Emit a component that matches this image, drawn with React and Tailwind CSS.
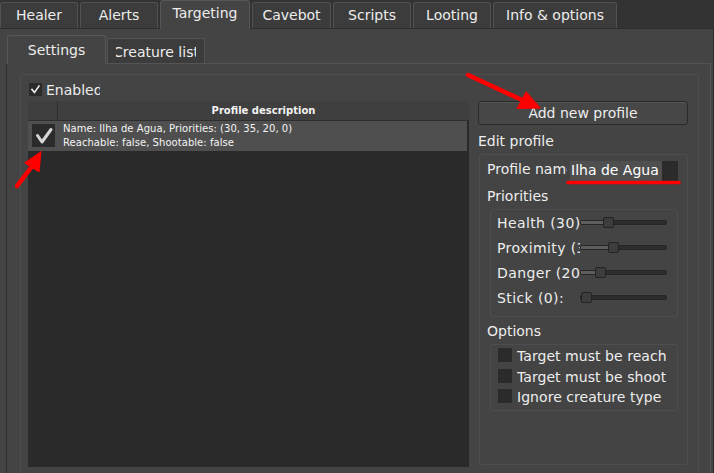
import React from "react";

const tabs = [
  { label: "Healer", w: "w-[78px]" },
  { label: "Alerts", w: "w-[78px]" },
  { label: "Targeting", w: "w-[90px]", active: true },
  { label: "Cavebot", w: "w-[79px]" },
  { label: "Scripts", w: "w-[78px]" },
  { label: "Looting", w: "w-[78px]" },
  { label: "Info & options", w: "w-[124px]" },
];

const sliders = [
  { label: "Health (30)", pos: 23 },
  { label: "Proximity (35):", pos: 28 },
  { label: "Danger (20):", pos: 15 },
  { label: "Stick (0):", pos: 1 },
];

const options = ["Target must be reachable", "Target must be shootable", "Ignore creature type"];

function SmallCheck() {
  return (
    <svg width="13" height="13" viewBox="0 0 13 13">
      <path d="M3 6.5 L5.5 9.5 L10 3" fill="none" stroke="#f2f2f2" strokeWidth="1.6" strokeLinecap="square" />
    </svg>
  );
}

function Slider({ label, pos }) {
  return (
    <div className="flex h-[25px] items-center">
      <div className="w-[83px] overflow-hidden whitespace-nowrap leading-[16px] tracking-[0.4px]">{label}</div>
      <div className="relative h-[11px] w-[87px]">
        <div className="absolute left-0 right-0 top-[3px] h-[5px] rounded-[2px] border border-[#262626] bg-[#2d2d2d]">
          <div className="h-full bg-[#5e5e5e]" style={{ width: pos + 2 }} />
        </div>
        <div
          className="absolute top-0 h-[11px] w-[11px] rounded-[2px] border border-[#232323] bg-[#3d3d3d]"
          style={{ left: pos }}
        />
      </div>
    </div>
  );
}

export default function App() {
  return (
    <div className="relative h-[473px] w-[714px] overflow-hidden bg-[#333333] font-['DejaVu_Sans',sans-serif] text-[14px] leading-[16px] text-[#ededed]">
      {/* top tab bar */}
      <div className="flex h-[28px] items-end gap-[2px]">
        {tabs.map((t) =>
          t.active ? (
            <div
              key={t.label}
              className={`relative z-10 -mb-px flex h-[29px] justify-center rounded-t-[3px] border border-b-0 border-[#565656] bg-[#444444] pt-[4px] ${t.w}`}
            >
              {t.label}
            </div>
          ) : (
            <div
              key={t.label}
              className={`flex h-[26px] items-center justify-center rounded-t-[3px] border border-b-0 border-[#525252] bg-[#3c3c3c] pb-[1px] ${t.w}`}
            >
              {t.label}
            </div>
          )
        )}
      </div>

      {/* main panel */}
      <div className="h-[445px] border-r border-t border-[#2c2c2c] bg-[#444444]">
        {/* sub tabs */}
        <div className="flex h-[34px] items-end gap-[1px] pl-[7px]">
          <div className="relative z-10 -mb-px flex h-[29px] w-[99px] justify-center rounded-t-[3px] border border-b-0 border-[#575757] bg-[#444444] pt-[6px]">
            Settings
          </div>
          <div className="flex h-[25px] w-[98px] items-center justify-center rounded-t-[3px] border border-b-0 border-[#525252] bg-[#3c3c3c] pt-[1px]">
            <div className="flex w-[80px] justify-center overflow-hidden whitespace-nowrap">Creature list</div>
          </div>
        </div>

        {/* sub panel */}
        <div className="ml-[6px] h-[420px] w-[705px] border border-[#545454] border-l-[#2e2e2e] pl-[13px] pt-[10px]">
          {/* group box */}
          <div className="h-[420px] w-[679px] rounded-[3px] border border-[#4e4e4e] pl-[7px] pt-[8px]">
            <div className="flex h-[13px] items-center">
              <div className="ml-[1px] flex h-[13px] w-[13px] items-center justify-center bg-[#2b2b2b]">
                <SmallCheck />
              </div>
              <div className="ml-[4px] w-[54px] overflow-hidden whitespace-nowrap">Enabled</div>
            </div>

            <div className="mt-[5px] flex items-start">
              {/* table */}
              <div className="h-[366px] w-[441px] bg-[#2a2a2a]">
                <div className="flex h-[20px] border-b border-[#2e2e2e] bg-[#3f3f3f]">
                  <div className="w-[30px] border-r border-[#2e2e2e]" />
                  <div className="flex flex-1 items-center justify-center text-[10px] font-bold leading-[13px] text-[#f2f2f2]">
                    Profile description
                  </div>
                </div>
                <div className="flex h-[30px] w-[439px] bg-[#4f4f4f]">
                  <div className="w-[30px] pl-[4px] pt-[3px]">
                    <div className="flex h-[23px] w-[23px] items-center justify-center bg-[#2b2b2b]">
                      <svg width="23" height="23" viewBox="0 0 23 23">
                        <path
                          d="M5.5 11.5 L10 18 L19 5.5"
                          fill="none"
                          stroke="#d6d6d6"
                          strokeWidth="3"
                          strokeLinecap="round"
                          strokeLinejoin="round"
                        />
                      </svg>
                    </div>
                  </div>
                  <div className="pl-[5px] pt-[1px] text-[10px] leading-[14px] tracking-[0.05px] text-[#f4f4f4]">
                    <div>Name: Ilha de Agua, Priorities: (30, 35, 20, 0)</div>
                    <div>Reachable: false, Shootable: false</div>
                  </div>
                </div>
              </div>

              {/* right column */}
              <div className="ml-[9px] w-[210px]">
                <div className="flex h-[24px] items-center justify-center rounded-[3px] border border-[#2a2a2a] bg-[#474747] shadow-[inset_0_1px_0_#555]">
                  Add new profile
                </div>
                <div className="mt-[8px]">Edit profile</div>
                <div className="ml-[1px] mt-[5px] h-[311px] w-[209px] rounded-[3px] border border-[#4e4e4e] pl-[7px] pt-[6px]">
                  <div className="flex items-start">
                    <div className="w-[80px] overflow-hidden whitespace-nowrap">Profile name</div>
                    <div className="ml-[3px] flex h-[20px] w-[108px] bg-[#2b2b2b]">
                      <div className="h-[20px] w-[92px] bg-[#4f4f4f] pl-[1px] pt-[1px] text-white">Ilha de Agua</div>
                    </div>
                  </div>
                  <div className="mt-[7px]">Priorities</div>
                  <div className="ml-[3px] mt-[5px] h-[108px] w-[188px] rounded-[3px] border border-[#4e4e4e] pl-[6px]">
                    {sliders.map((s) => (
                      <Slider key={s.label} {...s} />
                    ))}
                  </div>
                  <div className="mt-[6px]">Options</div>
                  <div className="ml-[3px] mt-[5px] h-[67px] w-[188px] rounded-[3px] border border-[#4e4e4e] pl-[7px] pt-[3px]">
                    {options.map((o) => (
                      <div key={o} className="flex h-[20.5px] items-start">
                        <div className="h-[14px] w-[14px] bg-[#2b2b2b]" />
                        <div className="ml-[5px] w-[149px] overflow-hidden whitespace-nowrap tracking-[0.05px]">{o}</div>
                      </div>
                    ))}
                  </div>
                </div>
              </div>
            </div>
          </div>
        </div>
      </div>

      {/* annotations */}
      <svg className="pointer-events-none absolute left-0 top-0" width="714" height="473" viewBox="0 0 714 473">
        <g fill="#ff0000" stroke="#ff0000" strokeLinecap="round">
          <line x1="468" y1="75" x2="524" y2="101" strokeWidth="4.5" />
          <polygon points="540,108 517,108.5 526,92" strokeWidth="1" strokeLinejoin="round" />
          <line x1="17" y1="186" x2="33" y2="165" strokeWidth="4.5" />
          <polygon points="41,152 39,172 25,163" strokeWidth="1" strokeLinejoin="round" />
          <line x1="568" y1="182.5" x2="679" y2="182.5" strokeWidth="3.5" />
        </g>
      </svg>
    </div>
  );
}
